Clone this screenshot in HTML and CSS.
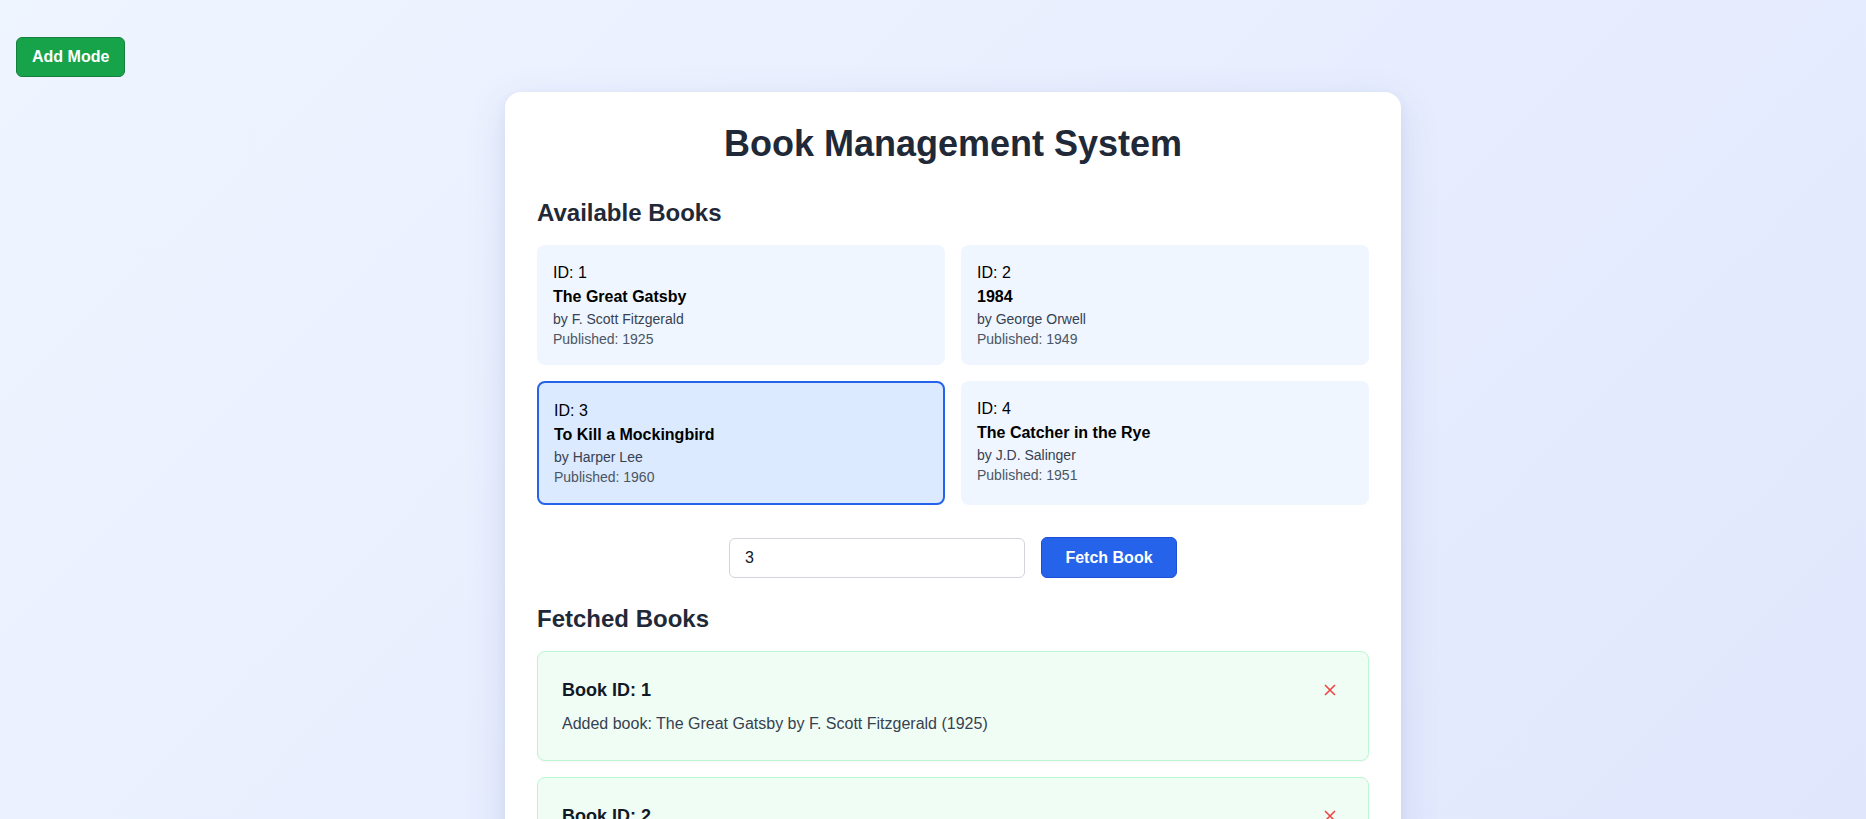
FILE: index.html
```html
<!DOCTYPE html>
<html lang="en">
<head>
<meta charset="utf-8">
<title>Book Management System</title>
<link rel="stylesheet" href="styles.css">
</head>
<body>
<button class="mode-btn">Add Mode</button>
<main class="page">
  <section class="panel">
    <h1 class="title">Book Management System</h1>
    <h2 class="section-title">Available Books</h2>
    <div class="book-grid">
      <div class="book">
        <div class="book-id">ID: 1</div>
        <div class="book-title">The Great Gatsby</div>
        <div class="book-author">by F. Scott Fitzgerald</div>
        <div class="book-year">Published: 1925</div>
      </div>
      <div class="book">
        <div class="book-id">ID: 2</div>
        <div class="book-title">1984</div>
        <div class="book-author">by George Orwell</div>
        <div class="book-year">Published: 1949</div>
      </div>
      <div class="book book-selected">
        <div class="book-id">ID: 3</div>
        <div class="book-title">To Kill a Mockingbird</div>
        <div class="book-author">by Harper Lee</div>
        <div class="book-year">Published: 1960</div>
      </div>
      <div class="book">
        <div class="book-id">ID: 4</div>
        <div class="book-title">The Catcher in the Rye</div>
        <div class="book-author">by J.D. Salinger</div>
        <div class="book-year">Published: 1951</div>
      </div>
    </div>
    <div class="fetch-row">
      <input class="fetch-input" type="text" value="3">
      <button class="fetch-btn">Fetch Book</button>
    </div>
    <h2 class="section-title">Fetched Books</h2>
    <div class="fetched-list">
      <div class="fetched">
        <div class="fetched-head">
          <span class="fetched-title">Book ID: 1</span>
          <button class="remove-btn" aria-label="Remove"><svg width="12" height="12" viewBox="0 0 12 12"><path d="M1 1L11 11M11 1L1 11" stroke="#ef4444" stroke-width="1.6" fill="none"/></svg></button>
        </div>
        <p class="fetched-text">Added book: The Great Gatsby by F. Scott Fitzgerald (1925)</p>
      </div>
      <div class="fetched">
        <div class="fetched-head">
          <span class="fetched-title">Book ID: 2</span>
          <button class="remove-btn" aria-label="Remove"><svg width="12" height="12" viewBox="0 0 12 12"><path d="M1 1L11 11M11 1L1 11" stroke="#ef4444" stroke-width="1.6" fill="none"/></svg></button>
        </div>
        <p class="fetched-text">Added book: 1984 by George Orwell (1949)</p>
      </div>
    </div>
  </section>
</main>
</body>
</html>
```

FILE: styles.css
```css
* { box-sizing: border-box; }

html, body {
  margin: 0;
  min-height: 100%;
}

body {
  font-family: "Liberation Sans", Arial, sans-serif;
  background: linear-gradient(135deg, #eff5ff 0%, #e0e7fd 100%);
  background-attachment: fixed;
  min-height: 100vh;
  color: #111827;
}

.mode-btn {
  position: fixed;
  top: 37px;
  left: 16px;
  height: 40px;
  padding: 0 15px;
  background: #16a34a;
  color: #fff;
  border: 1px solid #15803d;
  border-radius: 6px;
  font-family: inherit;
  font-size: 16px;
  font-weight: bold;
  cursor: pointer;
}

.page {
  padding: 92px 0 40px 40px;
}

.panel {
  width: 896px;
  margin: 0 auto;
  background: #fff;
  border-radius: 16px;
  padding: 32px;
  box-shadow: 0 12px 40px rgba(60, 80, 160, 0.13), 0 4px 12px rgba(60, 80, 160, 0.06);
}

.title {
  margin: 0 0 33px;
  font-size: 36px;
  line-height: 40px;
  font-weight: bold;
  text-align: center;
  color: #1f2937;
}

.section-title {
  margin: 0 0 16px;
  font-size: 24px;
  line-height: 32px;
  font-weight: bold;
  color: #1f2937;
}

.book-grid {
  display: grid;
  grid-template-columns: 1fr 1fr;
  gap: 16px;
}

.book {
  background: #eff6ff;
  border-radius: 8px;
  padding: 16px 16px;
}

.book-selected {
  background: #dbeafe;
  border: 2px solid #2563eb;
  padding: 16px 15px;
}

.book-id {
  font-size: 16px;
  line-height: 24px;
  color: #000;
}

.book-title {
  font-size: 16px;
  line-height: 24px;
  font-weight: bold;
  color: #000;
}

.book-author {
  font-size: 14px;
  line-height: 20px;
  color: #374151;
}

.book-year {
  font-size: 14px;
  line-height: 20px;
  color: #4b5563;
}

.fetch-row {
  display: flex;
  justify-content: center;
  align-items: center;
  gap: 16px;
  margin: 32px 0 25px;
}

.fetch-input {
  width: 296px;
  height: 40px;
  padding: 0 15px;
  border: 1px solid #d1d5db;
  border-radius: 6px;
  font-family: inherit;
  font-size: 16px;
  color: #111827;
  background: #fff;
}

.fetch-btn {
  height: 41px;
  width: 136px;
  background: #2563eb;
  color: #fff;
  border: 1px solid #1d4ed8;
  border-radius: 6px;
  font-family: inherit;
  font-size: 16px;
  font-weight: bold;
  cursor: pointer;
}

.fetched-list {
  display: flex;
  flex-direction: column;
  gap: 16px;
}

.fetched {
  background: #f0fdf4;
  border: 1px solid #bbf7d0;
  border-radius: 8px;
  padding: 24px;
  box-shadow: 0 1px 2px rgba(0, 0, 0, 0.04);
}

.fetched-head {
  display: flex;
  justify-content: space-between;
  align-items: center;
  height: 28px;
  margin-bottom: 8px;
}

.fetched-title {
  font-size: 18px;
  line-height: 28px;
  font-weight: bold;
  color: #111827;
}

.remove-btn {
  background: none;
  border: none;
  padding: 0;
  margin-right: 8px;
  width: 12px;
  height: 12px;
  display: flex;
  cursor: pointer;
}

.fetched-text {
  margin: 0;
  font-size: 16px;
  line-height: 24px;
  color: #374151;
}
```
